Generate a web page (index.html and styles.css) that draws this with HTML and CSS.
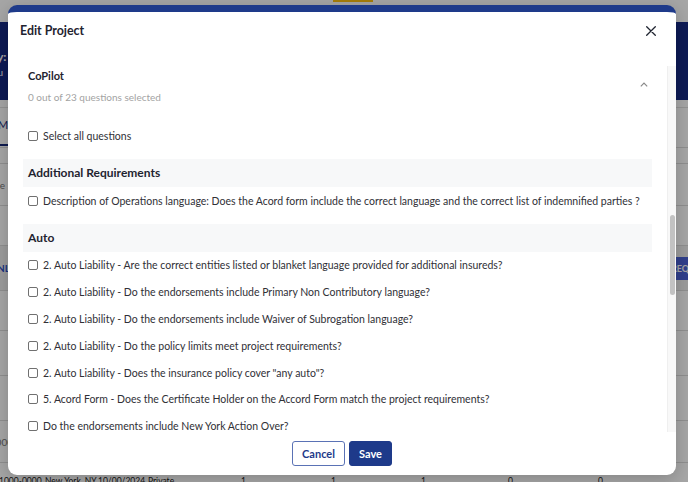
FILE: index.html
```html
<!DOCTYPE html>
<html>
	<head>
		<meta charset="UTF-8">
		<title>Edit Project</title>
		<link rel="stylesheet" href="styles.css">
	</head>
	<body>
		<div class="page">
			<div class="topbar"><span class="topbar-flag"></span></div>
			<div class="banner">
				<p class="banner-title">Summary:</p>
				<p class="banner-sub">Here you</p>
			</div>
			<div class="strip"></div>
			<div class="tabs"><span class="tab active">My Projects</span></div>
			<div class="table">
				<div class="trow h16"></div>
				<div class="trow h42"><span class="cell-gray">Type</span></div>
				<div class="trow h40"></div>
				<div class="trow h45 hl"><span class="cell-link">NL</span><span class="req-btn">REQ</span></div>
				<div class="trow h40"></div>
				<div class="trow h45"></div>
				<div class="trow h45"></div>
				<div class="trow h42"><span class="cell-gray">10000</span></div>
				<div class="trow last">
					<span class="c1">1000-0000</span>
					<span class="c2">New York, NY</span>
					<span class="c3">10/00/2024</span>
					<span class="c4">Private</span>
					<span class="c5">1</span>
					<span class="c6">1</span>
					<span class="c7">1</span>
					<span class="c8">0</span>
					<span class="c9">0</span>
				</div>
			</div>

			<div class="overlay"></div>

			<div class="modal">
				<div class="modal-head">
					<h2 class="modal-title">Edit Project</h2>
					<svg class="close" width="10" height="10" viewBox="0 0 10 10">
						<path d="M0.7 0.7 L9.3 9.3 M9.3 0.7 L0.7 9.3" stroke="#1f2430" stroke-width="1.3" stroke-linecap="round"/>
					</svg>
				</div>

				<div class="modal-body">
					<div class="scroll-content">
						<div class="copilot-head">
							<div>
								<div class="copilot-title">CoPilot</div>
								<div class="copilot-sub">0 out of 23 questions selected</div>
							</div>
							<svg class="chevron" width="8" height="5" viewBox="0 0 8 5">
								<path d="M0.8 4.3 L4 1 L7.2 4.3" fill="none" stroke="#8a8a8a" stroke-width="1.2"/>
							</svg>
						</div>

						<label class="q select-all"><span class="box"></span>Select all questions</label>

						<div class="section-title">Additional Requirements</div>
						<label class="q"><span class="box"></span>Description of Operations language: Does the Acord form include the correct language and the correct list of indemnified parties ?</label>

						<div class="section-title">Auto</div>
						<label class="q"><span class="box"></span>2. Auto Liability - Are the correct entities listed or blanket language provided for additional insureds?</label>
						<label class="q"><span class="box"></span>2. Auto Liability - Do the endorsements include Primary Non Contributory language?</label>
						<label class="q"><span class="box"></span>2. Auto Liability - Do the endorsements include Waiver of Subrogation language?</label>
						<label class="q"><span class="box"></span>2. Auto Liability - Do the policy limits meet project requirements?</label>
						<label class="q"><span class="box"></span>2. Auto Liability - Does the insurance policy cover "any auto"?</label>
						<label class="q"><span class="box"></span>5. Acord Form - Does the Certificate Holder on the Accord Form match the project requirements?</label>
						<label class="q"><span class="box"></span>Do the endorsements include New York Action Over?</label>
						<label class="q"><span class="box"></span>Do the endorsements include Primary Non Contributory language?</label>
					</div>
					<div class="scrollbar"><div class="thumb"></div></div>
				</div>

				<div class="modal-foot">
					<button class="btn btn-cancel">Cancel</button>
					<button class="btn btn-save">Save</button>
				</div>
			</div>
		</div>
	</body>
</html>
```

FILE: styles.css
```css
* {
	margin: 0;
	padding: 0;
	box-sizing: border-box;
}

body {
	font: 12px Lato, "Liberation Sans", sans-serif;
	overflow: hidden;
}

.page {
	position: relative;
	width: 688px;
	height: 482px;
	overflow: hidden;
	background: #fff;
}

/* page behind the dialog */
.topbar {
	height: 22px;
}

.topbar-flag {
	display: block;
	margin-left: 333px;
	width: 40px;
	height: 2px;
	background: #ffc010;
}

.banner {
	height: 78px;
	background: #152883;
	color: #fff;
	padding-top: 27px;
}

.banner-title {
	font-weight: bold;
	font-size: 12px;
	line-height: 16px;
	text-indent: -47px;
}

.banner-sub {
	font-size: 10px;
	line-height: 14px;
	text-indent: -37px;
}

.strip {
	height: 8px;
	border-bottom: 1px solid #e2e2e2;
}

.tabs {
	height: 39px;
}

.tab {
	display: inline-block;
	height: 38px;
	line-height: 34px;
	padding: 0 10px 0 0;
	text-indent: -2px;
	font-size: 11px;
	color: #14287a;
	border-bottom: 2px solid #14287a;
}

.trow {
	border-top: 1px solid #dcdcdc;
	display: flex;
	align-items: center;
	position: relative;
	font-size: 10px;
}

.h16 { height: 16px; }
.h40 { height: 40px; }
.h42 { height: 42px; }
.h45 { height: 45px; }

.trow.hl {
	background: #f0f0f0;
}

.cell-gray {
	color: #777;
	text-indent: -16px;
}

.cell-link {
	color: #2a4fc8;
	font-weight: bold;
	text-indent: -3px;
}

.req-btn {
	margin-left: auto;
	width: 24px;
	height: 23px;
	line-height: 23px;
	margin-right: -12px;
	text-indent: -5px;
	background: #4a62d8;
	color: #fff;
	font-size: 9px;
	font-weight: bold;
}

.trow.last {
	height: 40px;
	color: #222;
	font-size: 8.5px;
}

.trow.last span {
	position: absolute;
	top: 13px;
	white-space: nowrap;
}

.c1 { left: -1px; }
.c2 { left: 45px; }
.c3 { left: 98px; }
.c4 { left: 148px; }
.c5 { left: 241px; }
.c6 { left: 331px; }
.c7 { left: 421px; }
.c8 { left: 508px; }
.c9 { left: 598px; }

.overlay {
	position: absolute;
	left: 0;
	top: 0;
	right: 0;
	bottom: 0;
	background: rgba(0, 0, 0, 0.35);
}

/* dialog */
.modal {
	position: absolute;
	left: 8px;
	top: 5px;
	width: 668px;
	height: 470px;
	background: #fff;
	border-top: 7px solid #1e3a8a;
	border-radius: 9px;
	overflow: hidden;
	display: flex;
	flex-direction: column;
	box-shadow: 0 4px 18px rgba(0, 0, 0, 0.2);
}

.modal-head {
	height: 54px;
	flex: none;
	display: flex;
	justify-content: space-between;
	align-items: flex-start;
	padding: 10px 20px 0 12px;
}

.modal-title {
	font-size: 12.4px;
	line-height: 18px;
	font-weight: bold;
	color: #1f2430;
}

.close {
	margin-top: 4px;
}

.modal-body {
	flex: 1;
	display: flex;
	min-height: 0;
}

.scroll-content {
	flex: 1;
	overflow: hidden;
	padding: 0 15px;
}

.scrollbar {
	width: 9px;
	background: #f8f8f8;
	border-left: 1px solid #efefef;
}

.thumb {
	width: 5px;
	height: 80px;
	margin: 149px auto 0;
	border-radius: 3px;
	background: #c2c2c2;
}

.copilot-head {
	display: flex;
	justify-content: space-between;
	align-items: flex-start;
	padding: 0 4px 0 5px;
}

.copilot-title {
	font-size: 11px;
	font-weight: bold;
	line-height: 20px;
	color: #1f2430;
}

.copilot-sub {
	margin-top: 2px;
	font-size: 10px;
	line-height: 18px;
	color: #a3a3a3;
}

.chevron {
	margin-top: 15.5px;
}

.q {
	display: flex;
	align-items: center;
	height: 26.8px;
	padding-left: 5px;
	font-size: 10.5px;
	color: #303036;
	white-space: nowrap;
}

.select-all {
	margin-top: 16.5px;
}

.box {
	flex: none;
	width: 10px;
	height: 10px;
	margin-right: 5px;
	border: 1px solid #707070;
	border-radius: 2px;
	background: #fff;
}

.section-title {
	margin-top: 10px;
	height: 28px;
	line-height: 28px;
	padding-left: 5px;
	background: #f7f8f9;
	font-size: 12px;
	font-weight: bold;
	color: #1f2430;
}

.modal-foot {
	height: 43px;
	flex: none;
	display: flex;
	justify-content: center;
	align-items: flex-start;
	gap: 4px;
	padding-top: 9px;
}

.btn {
	height: 25px;
	padding: 0;
	border-radius: 3px;
	font-family: Lato, "Liberation Sans", sans-serif;
	font-size: 11px;
	font-weight: bold;
	cursor: pointer;
}

.btn-cancel {
	width: 53px;
	background: #fff;
	border: 1px solid #5a72b5;
	color: #1e3a8a;
}

.btn-save {
	width: 43px;
	background: #1e3a8a;
	border: 1px solid #1e3a8a;
	color: #fff;
}
```
